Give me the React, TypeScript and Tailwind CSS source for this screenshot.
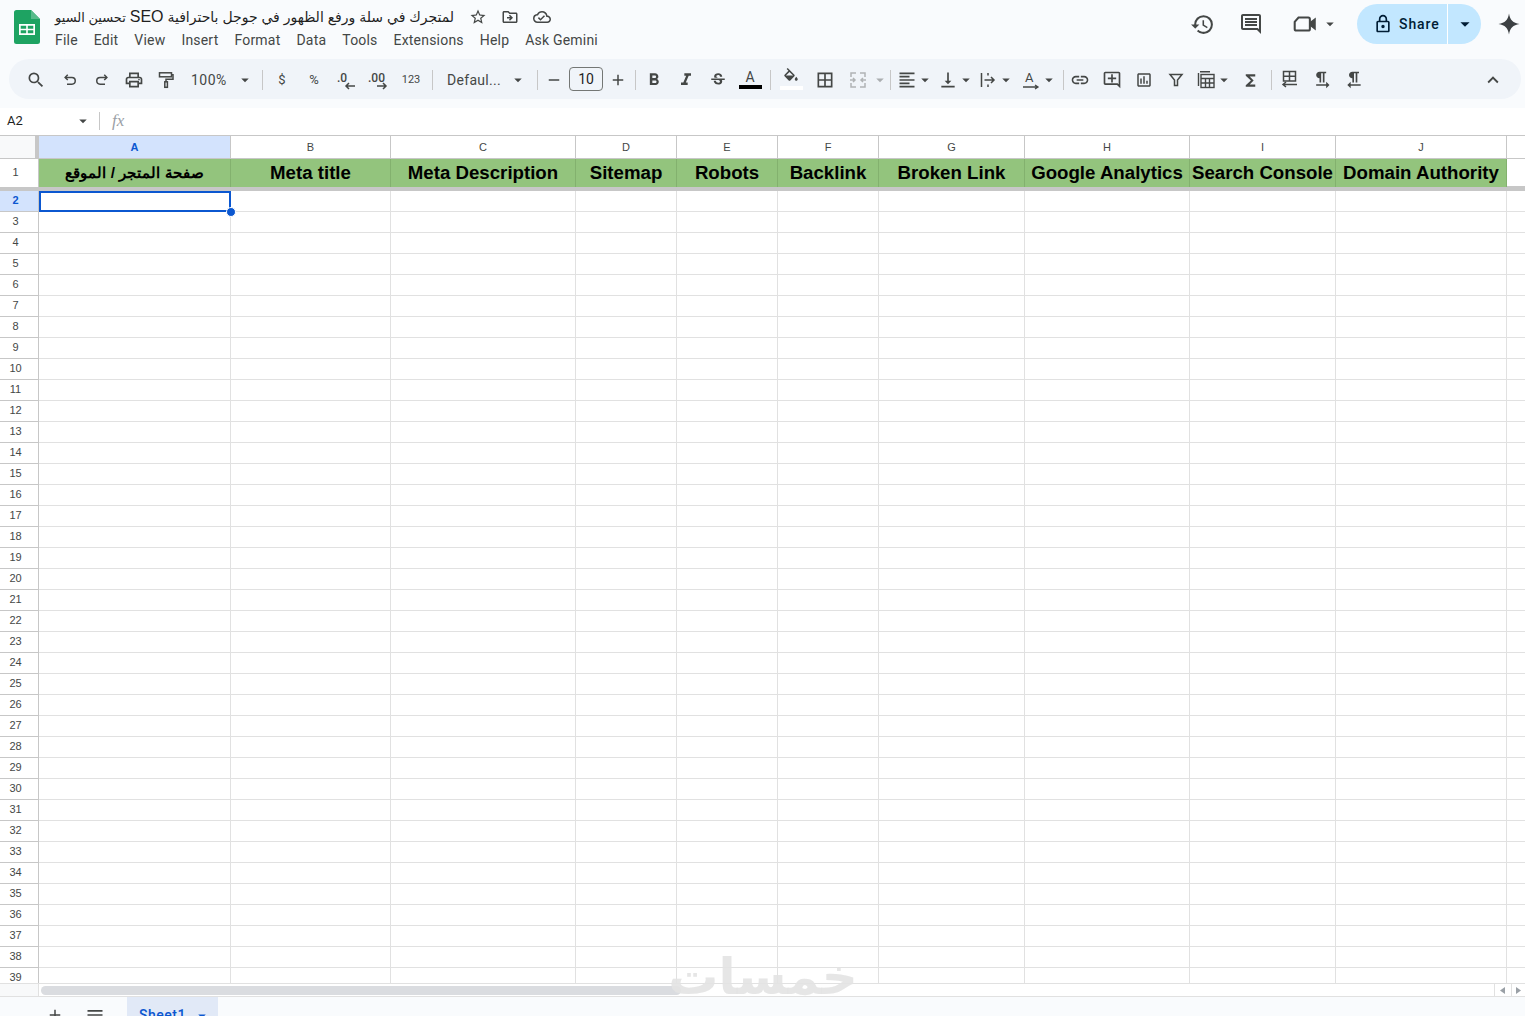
import React from "react";
import {
  MdSearch, MdOutlinePrint, MdArrowDropDown, MdAdd, MdRemove, MdFormatBold, MdFormatItalic,
  MdStrikethroughS, MdBorderAll, MdFormatAlignLeft, MdVerticalAlignBottom,
  MdOutlineInsertLink, MdOutlineAddComment, MdOutlineInsertChart, MdFunctions, MdHistory, MdOutlineComment,
  MdOutlineLock, MdExpandLess, MdStarBorder, MdOutlineDriveFileMove, MdOutlineCloudDone,
  MdFormatTextdirectionLToR, MdFormatTextdirectionRToL, MdMenu,
} from "react-icons/md";

const ICON = "#444746";
const Slot = ({ children, className = "w-8" }: { children?: React.ReactNode; className?: string }) => (
  <div className={`flex h-6 shrink-0 items-center justify-center text-[#444746] ${className}`}>{children}</div>
);
const Sep = ({ className = "" }: { className?: string }) => <div className={`h-5 w-px shrink-0 bg-[#c7c7c7] ${className}`} />;
const Caret = ({ className = "w-3" }: { className?: string }) => (
  <Slot className={className}><MdArrowDropDown size={18} className="shrink-0" /></Slot>
);
const S = ({ children, w = 18 }: { children: React.ReactNode; w?: number }) => (
  <svg width={w} height={w} viewBox="0 0 24 24" fill="none" stroke={ICON} strokeWidth="2">{children}</svg>
);

const cols = [
  { l: "A", t: "صفحة المتجر / الموقع" },
  { l: "B", t: "Meta title" },
  { l: "C", t: "Meta Description" },
  { l: "D", t: "Sitemap" },
  { l: "E", t: "Robots" },
  { l: "F", t: "Backlink" },
  { l: "G", t: "Broken Link" },
  { l: "H", t: "Google Analytics" },
  { l: "I", t: "Search Console" },
  { l: "J", t: "Domain Authority" },
  { l: "", t: "" },
];
const GRID = "grid grid-cols-[39px_192px_160px_185px_101px_101px_101px_146px_165px_146px_171px_18px]";
const rows = Array.from({ length: 38 }, (_, i) => i + 2);
const menu = ["File", "Edit", "View", "Insert", "Format", "Data", "Tools", "Extensions", "Help", "Ask Gemini"];

function Logo() {
  return (
    <svg width="26" height="34" viewBox="0 0 26 34" className="shrink-0">
      <path d="M2.500 0H17l9 9v22.500a2.500 2.500 0 0 1-2.500 2.500h-21A2.500 2.500 0 0 1 0 31.500v-29A2.500 2.500 0 0 1 2.500 0Z" fill="#1ea362" />
      <path d="M17 0l9 9h-9Z" fill="#57bb8a" />
      <path d="M5 14h16v11H5Zm1.700 1.700v3h5.500v-3Zm7.100 0v3h5.500v-3Zm-7.100 4.600v3h5.500v-3Zm7.100 0v3h5.500v-3Z" fill="#fff" fillRule="evenodd" />
    </svg>
  );
}

export default function App() {
  return (
    <div className="relative flex h-[1016px] w-[1525px] flex-col overflow-hidden bg-white [font-family:Roboto,'Liberation_Sans',sans-serif]">
      {/* header */}
      <header className="h-[108px] shrink-0 bg-[#f9fbfd]">
        <div className="flex h-[59px] items-start">
          <div className="ml-[14px] mt-[10px]"><Logo /></div>
          <div className="ml-[15px] flex flex-col">
            <div className="mt-[6px] flex h-[22px] items-center">
              <span dir="ltr" className="w-[396px] whitespace-nowrap text-[14px] leading-[22px] text-[#1f1f1f] [font-family:'Liberation_Sans','DejaVu_Sans',sans-serif]">
                <span className="text-[13px]">تحسين السيو</span> <span className="text-[16px]">SEO</span> لمتجرك في سلة ورفع الظهور في جوجل باحترافية
              </span>
              <div className="ml-[11px] flex items-center text-[#444746]">
                <Slot className="w-8"><MdStarBorder size={18} /></Slot>
                <Slot className="w-8"><MdOutlineDriveFileMove size={18} /></Slot>
                <Slot className="w-8"><MdOutlineCloudDone size={18} /></Slot>
              </div>
            </div>
            <nav className="mt-[2px] flex gap-4 text-[14px] leading-5 tracking-[0.2px] text-[#444746]">
              {menu.map((m) => <span key={m} className="whitespace-nowrap">{m}</span>)}
            </nav>
          </div>
          <div className="ml-auto mr-[4px] mt-[4px] flex h-10 items-center">
            <Slot className="w-8"><MdHistory size={25} /></Slot>
            <Slot className="ml-[17px] w-8"><MdOutlineComment size={24} /></Slot>
            <Slot className="ml-[22px] w-8">
              <svg width="26" height="26" viewBox="0 0 24 24" fill="none" stroke={ICON} strokeWidth="1.900"><path d="M6 6h9a1.500 1.500 0 0 1 1.500 1.500v9A1.500 1.500 0 0 1 15 18H4a1.500 1.500 0 0 1-1.500-1.500V10Z" /><path d="M17 11l4-3v8l-4-3Z" fill={ICON} /></svg>
            </Slot>
            <Caret className="w-[18px]" />
            <div className="ml-[18px] flex h-10 w-[124px] items-center rounded-full bg-[#c2e7ff] text-[#001d35]">
              <div className="flex h-10 w-[91px] items-center border-r border-white pl-4 text-[14px] font-medium tracking-[0.9px]">
                <MdOutlineLock size={20} className="shrink-0" />
                <span className="ml-[6px]">Share</span>
              </div>
              <div className="flex flex-1 justify-center"><MdArrowDropDown size={22} /></div>
            </div>
            <div className="ml-[16px] flex w-6 items-center justify-center">
              <svg width="24" height="24" viewBox="0 0 24 24"><path d="M12 1.500C13 8 16 11 22.500 12 16 13 13 16 12 22.500 11 16 8 13 1.500 12 8 11 11 8 12 1.500Z" fill="#3c4043" /></svg>
            </div>
          </div>
        </div>
        {/* toolbar */}
        <div className="ml-[9px] flex h-10 w-[1512px] items-center rounded-full bg-[#f0f4f9] pl-[11px] pt-[2px] text-[#444746]">
          <Slot><MdSearch size={20} /></Slot>
          <Slot className="ml-0.5 w-8"><S><path d="M9 5 5.500 8.500 9 12" /><path d="M6 8.500h8.500a4.500 4.500 0 0 1 0 9H8" /></S></Slot>
          <Slot><S><path d="M15 5l3.500 3.500L15 12" /><path d="M18 8.500H9.500a4.500 4.500 0 0 0 0 9H16" /></S></Slot>
          <Slot><MdOutlinePrint size={20} /></Slot>
          <Slot>
            <svg width="18" height="18" viewBox="0 0 18 18" fill="none" stroke={ICON} strokeWidth="1.500"><rect x="2.500" y="1.800" width="12" height="4" /><path d="M14.500 3.800H16v4.500H9v2.500" /><rect x="7.800" y="10.800" width="2.600" height="5.500" /></svg>
          </Slot>
          <div className="flex h-6 w-[72px] shrink-0 items-center justify-between pl-[9px] text-[14px] tracking-[0.5px]">
            <span>100%</span><MdArrowDropDown size={18} />
          </div>
          <Sep className="ml-2" />
          <Slot className="ml-[3px] w-8"><span className="text-[13px]">$</span></Slot>
          <Slot><span className="text-[13px]">%</span></Slot>
          <Slot>
            <div className="relative h-5 w-5">
              <span className="absolute left-[1px] top-0 text-[12px] font-medium leading-4">.0</span>
              <svg width="12" height="8" viewBox="0 0 12 8" className="absolute bottom-0 right-0" fill="none" stroke={ICON} strokeWidth="1.500"><path d="M11 4H2M5 1 2 4l3 3" /></svg>
            </div>
          </Slot>
          <Slot>
            <div className="relative h-5 w-5">
              <span className="absolute left-0 top-0 text-[12px] font-medium leading-4">.00</span>
              <svg width="12" height="8" viewBox="0 0 12 8" className="absolute bottom-0 right-0" fill="none" stroke={ICON} strokeWidth="1.500"><path d="M1 4h9M7 1l3 3-3 3" /></svg>
            </div>
          </Slot>
          <Slot className="ml-px w-8"><span className="text-[11px]">123</span></Slot>
          <Sep className="ml-[5px]" />
          <div className="ml-[14px] flex h-6 w-[80px] shrink-0 items-center justify-between text-[14px] tracking-[0.3px]">
            <span>Defaul...</span><MdArrowDropDown size={18} />
          </div>
          <Sep className="ml-[10px]" />
          <Slot className="ml-[4px] w-6"><MdRemove size={18} /></Slot>
          <div className="ml-[3px] -mt-[2px] flex h-6 w-[34px] shrink-0 items-center justify-center rounded border border-[#747775] text-[14px] text-[#1f1f1f]">10</div>
          <Slot className="ml-[3px] w-6"><MdAdd size={18} /></Slot>
          <Sep className="ml-[5px]" />
          <Slot className="ml-[2px] w-8"><MdFormatBold size={20} /></Slot>
          <Slot><MdFormatItalic size={20} /></Slot>
          <Slot><MdStrikethroughS size={18} /></Slot>
          <Slot>
            <div className="-mt-[2px] flex flex-col items-center">
              <span className="text-[14px] leading-[14px]">A</span>
              <div className="mt-[1px] h-1 w-[23px] bg-black" />
            </div>
          </Slot>
          <Sep className="ml-[4px]" />
          <Slot className="ml-[4px] w-8">
            <div className="-mt-[2px] flex flex-col items-center">
              <svg width="18" height="18" viewBox="0 0 24 24" fill={ICON}><path d="M16.560 8.940 7.620 0 6.210 1.410l2.380 2.380-5.150 5.150a1.490 1.490 0 0 0 0 2.120l5.500 5.500c.29.29.68.44 1.060.44s.77-.15 1.060-.44l5.500-5.500c.59-.58.59-1.530 0-2.120ZM5.210 10 10 5.210 14.790 10ZM19 11.500s-2 2.170-2 3.500c0 1.100.9 2 2 2s2-.9 2-2c0-1.330-2-3.500-2-3.500Z" fillRule="evenodd" /></svg>
              <div className="h-1 w-[23px] bg-white" />
            </div>
          </Slot>
          <Slot className="ml-[2px] w-8"><MdBorderAll size={20} /></Slot>
          <Slot className="ml-[1px] w-8">
            <svg width="18" height="18" viewBox="0 0 18 18" fill="none" stroke="#b0b3b5" strokeWidth="1.500"><path d="M7 2H2v4M7 16H2v-4M11 2h5v4M11 16h5v-4M1 9h5M4 7l2 2-2 2M17 9h-5M14 7l-2 2 2 2" /></svg>
          </Slot>
          <Caret className="w-3 opacity-40" />
          <Sep className="ml-[4px]" />
          <Slot className="ml-[4px] w-6"><MdFormatAlignLeft size={20} /></Slot>
          <Caret />
          <Slot className="ml-[5px] w-6"><MdVerticalAlignBottom size={20} /></Slot>
          <Caret />
          <Slot className="ml-[4px] w-6">
            <svg width="18" height="18" viewBox="0 0 18 18" fill="none" stroke={ICON} strokeWidth="1.500"><path d="M2.500 2v14M9 2v2.500M9 13.500V16M5.500 9H15M12 6l3 3-3 3" /></svg>
          </Slot>
          <Caret />
          <Slot className="ml-[7px] w-6">
            <div className="relative h-[20px] w-[18px]">
              <span className="absolute left-[3px] top-0 text-[13px] leading-[15px]">A</span>
              <svg width="18" height="6" viewBox="0 0 18 6" className="absolute bottom-0 left-0" fill="none" stroke={ICON} strokeWidth="1.300"><path d="M1 3h15M13 1l3 2-3 2" /></svg>
            </div>
          </Slot>
          <Caret />
          <Sep className="ml-[8px]" />
          <Slot><MdOutlineInsertLink size={20} /></Slot>
          <Slot><MdOutlineAddComment size={20} /></Slot>
          <Slot><MdOutlineInsertChart size={18} /></Slot>
          <Slot>
            <svg width="16" height="16" viewBox="0 0 16 16" fill="none" stroke={ICON} strokeWidth="1.500"><path d="M2 2.500h12L9.500 8v5.500h-3V8Z" /></svg>
          </Slot>
          <Slot className="ml-[2px] w-6">
            <svg width="20" height="20" viewBox="0 0 20 20" fill="none" stroke={ICON} strokeWidth="1.400"><path d="M2.500 3v13M4 1.800h10" /><rect x="5" y="4.500" width="13" height="13" /><path d="M5 8.500h13M5 13h13M9.500 8.500v9M13.500 8.500v9" /></svg>
          </Slot>
          <Caret />
          <Slot className="ml-[4px] w-8"><MdFunctions size={19} /></Slot>
          <Sep className="ml-[5px]" />
          <Slot className="ml-[2px] w-8">
            <svg width="20" height="20" viewBox="0 0 20 20" fill="none" stroke={ICON} strokeWidth="1.500"><rect x="3.500" y="1.500" width="12" height="9.500" /><path d="M3.500 6.200h12M9.500 1.500V11M3 14.500h14M6 12l-3 2.500L6 17" /></svg>
          </Slot>
          <Slot><MdFormatTextdirectionLToR size={20} /></Slot>
          <Slot><MdFormatTextdirectionRToL size={20} /></Slot>
          <Slot className="ml-auto mr-3 w-8"><MdExpandLess size={22} /></Slot>
        </div>
      </header>

      {/* formula bar */}
      <div className="flex h-[28px] shrink-0 items-center border-b border-[#c7c7c7] bg-white pb-[2px]">
        <span className="ml-[7px] w-[67px] text-[13px] text-[#1f1f1f]">A2</span>
        <MdArrowDropDown size={18} className="text-[#444746]" />
        <div className="ml-[7px] h-[18px] w-px bg-[#c7c7c7]" />
        <span className="ml-[12px] text-[17px] italic text-[#9aa0a6] [font-family:'Liberation_Serif',serif]">fx</span>
      </div>

      {/* sheet grid */}
      <main className="min-h-0 flex-1 overflow-hidden text-[11px] text-[#444746] [font-family:'Liberation_Sans',Arial,sans-serif]">
        <div className={`${GRID} h-[23px] border-b border-[#c7c7c7]`}>
          <div className="border-r-4 border-[#c7c7c7] bg-[#f8f9fa]" />
          {cols.map((c, i) => (
            <div key={i} className={`flex items-center justify-center border-r border-[#c7c7c7] ${c.l === "A" ? "bg-[#d3e3fd] font-bold text-[#0b57d0]" : "bg-white"} ${c.l === "" ? "border-r-0" : ""}`}>{c.l}</div>
          ))}
        </div>
        <div className={`${GRID} h-[27px]`}>
          <div className="flex items-center justify-center border-r border-[#c7c7c7] bg-white pb-[2px] pr-[7px]">1</div>
          {cols.map((c, i) => (
            c.l ? (
              <div key={i} className={`flex items-center justify-center whitespace-nowrap border-r border-[#83b16e] bg-[#93c47d] font-bold text-black ${c.l === "A" ? "text-[15.4px]" : "text-[18.67px]"}`}>{c.t}</div>
            ) : <div key={i} />
          ))}
        </div>
        <div className="h-[5px] bg-[#c7c7c7]" />
        {rows.map((r) => (
          <div key={r} className={`${GRID} h-[21px]`}>
            <div className={`flex items-center justify-center border-b border-r border-[#c7c7c7] pb-[2px] pr-[7px] ${r === 2 ? "bg-[#d3e3fd] font-bold text-[#0b57d0]" : "bg-white"}`}>{r}</div>
            {cols.map((c, i) => (
              <div key={i} className={`relative border-b border-r border-[#e1e1e1] ${c.l === "" ? "border-r-0" : ""}`}>
                {r === 2 && i === 0 && (
                  <div className="absolute -bottom-px -right-px left-0 top-0 z-10 border-2 border-[#0b57d0]">
                    <div className="absolute -bottom-[7px] -right-[7px] box-content h-2 w-2 rounded-full border border-white bg-[#0b57d0]" />
                  </div>
                )}
              </div>
            ))}
          </div>
        ))}
      </main>

      {/* horizontal scrollbar */}
      <div className="flex h-[13px] shrink-0 border-t border-[#e1e1e1] bg-white">
        <div className="w-[39px] border-r border-[#e1e1e1] bg-[#f8f9fa]" />
        <div className="flex flex-1 items-center pl-[2px]">
          <div className="h-[9px] w-[640px] rounded-full bg-[#dadce0]" />
        </div>
        <div className="flex h-full w-[16px] items-center justify-center border-l border-[#e1e1e1]">
          <svg width="5" height="7" viewBox="0 0 5 7"><path d="M5 0v7L0 3.500Z" fill="#9aa0a6" /></svg>
        </div>
        <div className="ml-[1px] flex h-full w-[14px] items-center justify-center border-l border-[#e1e1e1]">
          <svg width="5" height="7" viewBox="0 0 5 7"><path d="M0 0v7l5-3.500Z" fill="#9aa0a6" /></svg>
        </div>
      </div>

      {/* sheet tabs */}
      <footer className="flex h-5 shrink-0 items-start border-t border-[#e1e1e1] bg-[#f9fbfd] text-[#444746]">
        <div className="ml-[46px] mt-[8px] flex items-center">
          <MdAdd size={18} />
          <MdMenu size={20} className="ml-[21px]" />
        </div>
        <div className="ml-[22px] flex h-10 w-[91px] items-start bg-[#e1e9f7] pl-[12px] pt-[8px] text-[14px] font-medium tracking-[0.5px] text-[#0b57d0]">
          <span>Sheet1</span>
          <MdArrowDropDown size={18} className="ml-[7px] mt-[2px]" />
        </div>
      </footer>

      {/* watermark */}
      <div dir="rtl" className="pointer-events-none absolute left-[668px] top-[947px] z-20 w-[190px] text-center text-[50px] font-bold leading-[60px] text-[#e3e3e3]/90 [font-family:'DejaVu_Sans',sans-serif]">خمسات</div>
    </div>
  );
}
